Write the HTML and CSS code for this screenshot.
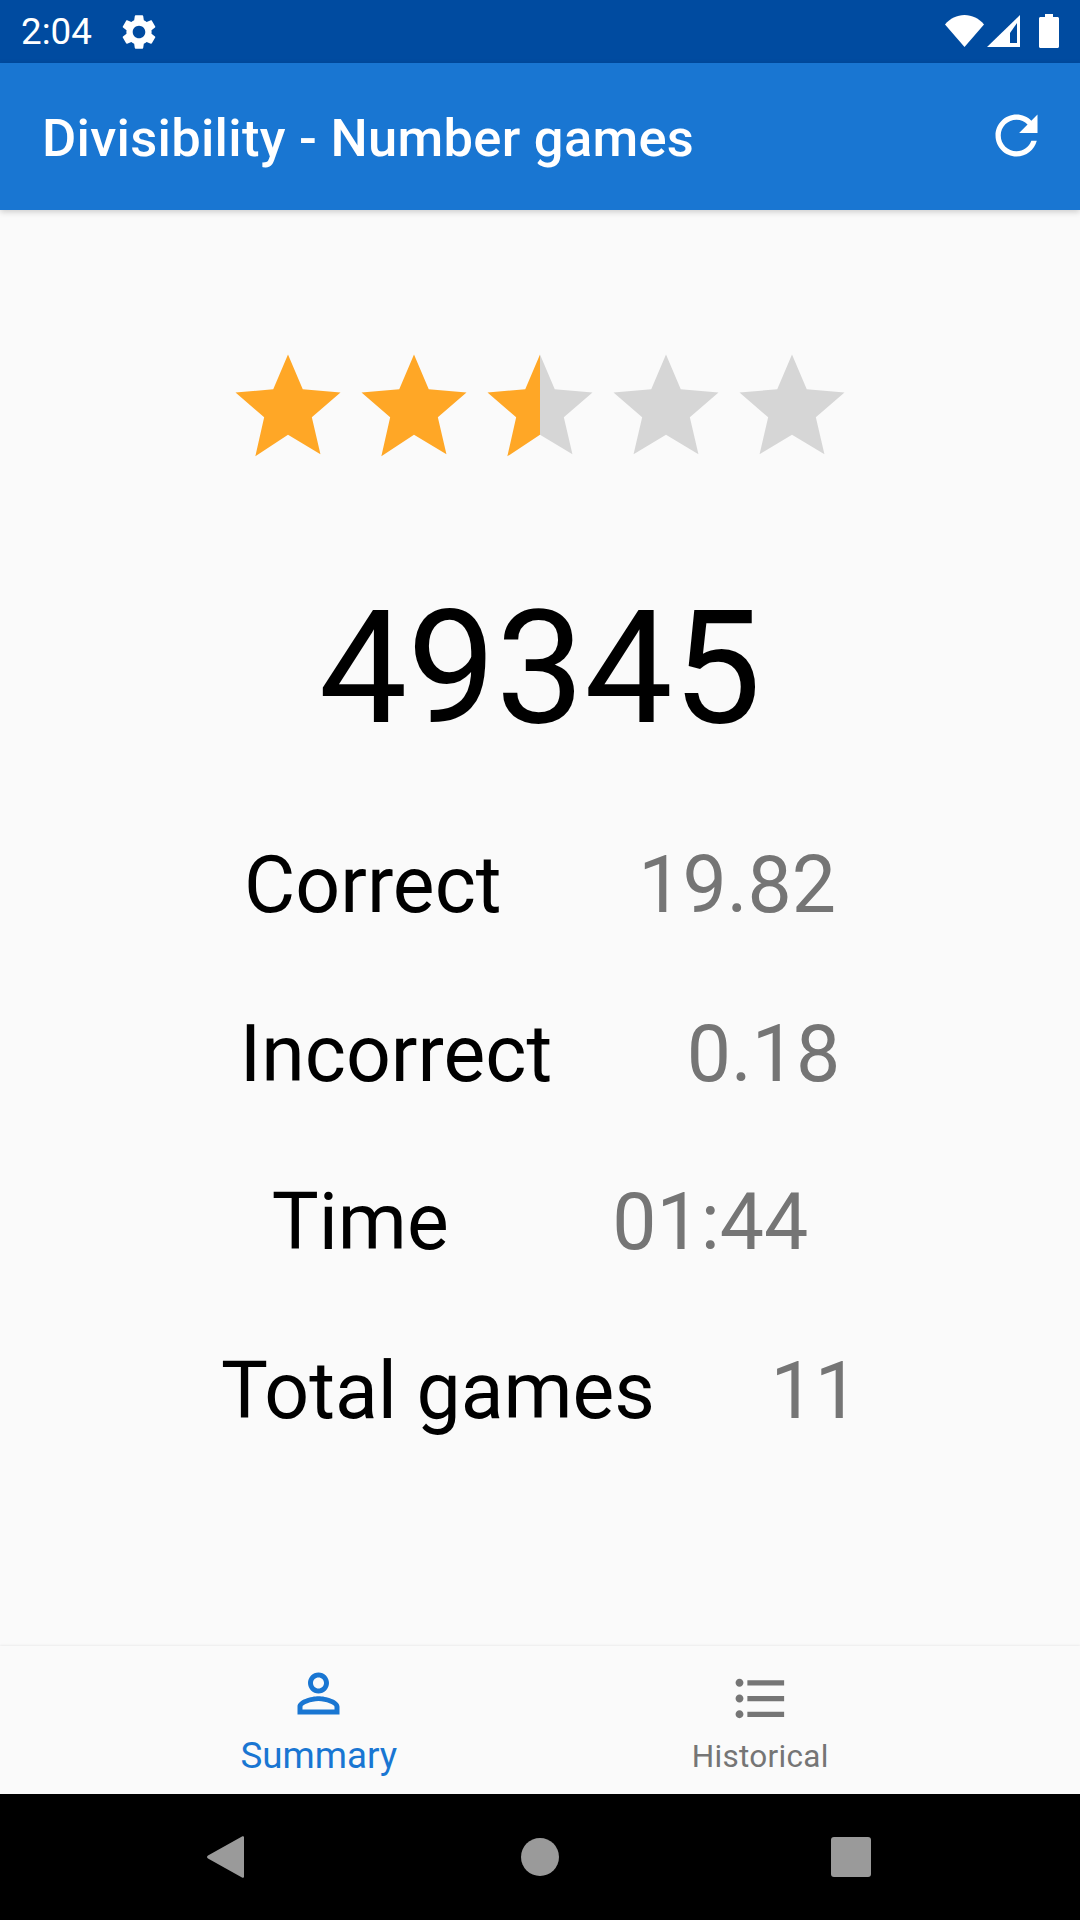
FILE: index.html
```html
<!DOCTYPE html>
<html lang="en">
<head>
    <meta charset="UTF-8">
    <meta name="viewport" content="width=device-width, initial-scale=1.0">
    <title>Divisibility - Number games</title>
    <link rel="stylesheet" href="styles.css">
</head>
<body>
    <div class="status-bar">
        <span class="clock">2:04</span>
        <svg class="gear" viewBox="0 0 24 24"><path fill="#fff" d="M19.14 12.94c.04-.3.06-.61.06-.94 0-.32-.02-.64-.07-.94l2.03-1.58c.18-.14.23-.41.12-.61l-1.92-3.32c-.12-.22-.37-.29-.59-.22l-2.39.96c-.5-.38-1.03-.7-1.62-.94l-.36-2.54c-.04-.24-.24-.41-.48-.41h-3.84c-.24 0-.43.17-.47.41l-.36 2.54c-.59.24-1.13.57-1.62.94l-2.39-.96c-.22-.08-.47 0-.59.22L2.74 8.87c-.12.21-.08.47.12.61l2.03 1.58c-.05.3-.09.63-.09.94s.02.64.07.94l-2.03 1.58c-.18.14-.23.41-.12.61l1.92 3.32c.12.22.37.29.59.22l2.39-.96c.5.38 1.03.7 1.62.94l.36 2.54c.05.24.24.41.48.41h3.84c.24 0 .44-.17.47-.41l.36-2.54c.59-.24 1.13-.56 1.62-.94l2.39.96c.22.08.47 0 .59-.22l1.92-3.32c.12-.22.07-.47-.12-.61l-2.01-1.58zM12 15.6c-1.98 0-3.6-1.62-3.6-3.6s1.62-3.6 3.6-3.6 3.6 1.62 3.6 3.6-1.62 3.6-3.6 3.6z"/></svg>
        <div class="status-icons">
            <svg class="wifi" viewBox="0 0 39 32"><path fill="#fff" d="M0 9.500C5 3.500 12 0 19.500 0S34 3.500 39 9.500L19.500 32z"/></svg>
            <svg class="signal" viewBox="0 0 33 32"><path fill="#fff" d="M0 32L33 0v32z"/><path fill="#004ba0" d="M23 28V18l7-10v20z"/></svg>
            <svg class="battery" viewBox="0 0 20 34"><path fill="#fff" d="M6 0h8v3h4.500c.8 0 1.500.7 1.500 1.500v28c0 .8-.7 1.500-1.500 1.500h-17C.7 34 0 33.300 0 32.500v-28C0 3.700.7 3 1.500 3H6z"/></svg>
        </div>
    </div>

    <header class="app-bar">
        <h1>Divisibility - Number games</h1>
        <svg class="refresh" viewBox="0 0 24 24"><path fill="#fff" d="M17.65 6.350C16.200 4.900 14.210 4 12 4c-4.420 0-7.990 3.580-7.990 8s3.570 8 7.990 8c3.730 0 6.840-2.550 7.730-6h-2.080c-.82 2.330-3.040 4-5.650 4-3.310 0-6-2.690-6-6s2.690-6 6-6c1.660 0 3.140.69 4.220 1.780L13 11h7V4l-2.350 2.350z"/></svg>
    </header>

    <main class="summary">
        <svg width="0" height="0" class="defs">
            <defs>
                <linearGradient id="halfStar">
                    <stop offset="50%" stop-color="#ffa726"/>
                    <stop offset="50%" stop-color="#d6d6d6"/>
                </linearGradient>
            </defs>
        </svg>
        <div class="stars">
            <svg class="star" viewBox="0 0 24 24"><path fill="#ffa726" d="M12 17.270L18.180 21l-1.640-7.030L22 9.240l-7.190-.61L12 2 9.190 8.630 2 9.240l5.460 4.730L5.780 21.400z"/></svg>
            <svg class="star" viewBox="0 0 24 24"><path fill="#ffa726" d="M12 17.270L18.180 21l-1.640-7.030L22 9.240l-7.190-.61L12 2 9.190 8.630 2 9.240l5.460 4.730L5.780 21.400z"/></svg>
            <svg class="star" viewBox="0 0 24 24"><path fill="url(#halfStar)" d="M12 17.270L18.180 21l-1.640-7.030L22 9.240l-7.190-.61L12 2 9.190 8.630 2 9.240l5.460 4.730L5.780 21.400z"/></svg>
            <svg class="star" viewBox="0 0 24 24"><path fill="#d6d6d6" d="M12 17.270L18.180 21l-1.640-7.030L22 9.240l-7.190-.61L12 2 9.190 8.630 2 9.240l5.460 4.730L5.820 21z"/></svg>
            <svg class="star" viewBox="0 0 24 24"><path fill="#d6d6d6" d="M12 17.270L18.180 21l-1.640-7.030L22 9.240l-7.190-.61L12 2 9.190 8.630 2 9.240l5.460 4.730L5.820 21z"/></svg>
        </div>

        <div class="score">49345</div>

        <div class="stat stat-correct"><span>Correct</span><span class="stat-value">19.82</span></div>
        <div class="stat stat-incorrect"><span>Incorrect</span><span class="stat-value">0.18</span></div>
        <div class="stat stat-time"><span>Time</span><span class="stat-value">01:44</span></div>
        <div class="stat stat-total"><span>Total games</span><span class="stat-value">11</span></div>
    </main>

    <nav class="bottom-nav">
        <div class="tab tab-active">
            <svg class="tab-icon" viewBox="0 0 24 24"><path fill="#1976d2" d="M12 5.900c1.160 0 2.100.94 2.100 2.100s-.94 2.100-2.100 2.100S9.900 9.160 9.900 8s.94-2.100 2.100-2.100m0 9c2.970 0 6.100 1.460 6.100 2.100v1.100H5.900V17c0-.64 3.130-2.100 6.100-2.100M12 4C9.790 4 8 5.790 8 8s1.790 4 4 4 4-1.790 4-4-1.790-4-4-4zm0 9c-2.670 0-8 1.340-8 4v3h16v-3c0-2.660-5.330-4-8-4z"/></svg>
            <span>Summary</span>
        </div>
        <div class="tab">
            <svg class="tab-icon" viewBox="0 0 24 24"><path fill="#757575" d="M4 10.500c-.83 0-1.500.67-1.500 1.500s.67 1.500 1.500 1.500 1.500-.67 1.500-1.500-.67-1.500-1.500-1.500zm0-6c-.83 0-1.500.67-1.500 1.500S3.170 7.500 4 7.500 5.500 6.830 5.500 6 4.830 4.500 4 4.500zm0 12c-.83 0-1.500.68-1.500 1.500s.68 1.500 1.500 1.500 1.500-.68 1.500-1.500-.67-1.500-1.500-1.500zM7 19h14v-2H7v2zm0-6h14v-2H7v2zm0-8v2h14V5H7z"/></svg>
            <span>Historical</span>
        </div>
    </nav>

    <div class="nav-bar">
        <svg class="nav-back" viewBox="0 0 37 42"><path fill="#9a9a9a" d="M35 .500c1-.7 2-.2 2 1v39c0 1.200-1 1.700-2 1L1 22.500c-1.300-.8-1.300-2.200 0-3z"/></svg>
        <div class="nav-home"></div>
        <div class="nav-recent"></div>
    </div>
</body>
</html>
```

FILE: styles.css
```css
* {
    box-sizing: border-box;
}
body {
    font-family: Roboto, sans-serif;
    background-color: #fafafa;
    display: flex;
    flex-direction: column;
    width: 1080px;
    height: 1920px;
    margin: 0;
    overflow: hidden;
}

/* status bar */
.status-bar {
    display: flex;
    align-items: center;
    height: 63px;
    padding: 0 21px 0 21px;
    background-color: #004ba0;
    color: #fff;
}
.clock {
    font-size: 36.75px;
}
.gear {
    width: 42px;
    height: 42px;
    margin-left: 26px;
}
.status-icons {
    display: flex;
    align-items: center;
    margin-left: auto;
    margin-top: -1px;
}
.wifi {
    width: 39px;
    height: 32px;
}
.signal {
    width: 33px;
    height: 32px;
    margin-left: 3px;
}
.battery {
    width: 20px;
    height: 34px;
    margin-left: 19px;
}

/* app bar */
.app-bar {
    position: relative;
    display: flex;
    align-items: center;
    justify-content: space-between;
    height: 147px;
    padding: 0 32px 0 42px;
    background-color: #1976d2;
    box-shadow: 0 2px 6px rgba(0, 0, 0, 0.18);
}
.app-bar h1 {
    margin: 3px 0 0;
    color: #fff;
    font-size: 52.5px;
    font-weight: 500;
    letter-spacing: 0.28px;
}
.refresh {
    width: 63px;
    height: 63px;
    margin-top: -2px;
}

/* summary */
.summary {
    flex: 1;
    display: flex;
    flex-direction: column;
    align-items: center;
    padding-top: 134px;
}
.defs {
    position: absolute;
}
.stars {
    display: flex;
}
.star {
    width: 126px;
    height: 126px;
}
.score {
    margin-top: 106px;
    font-size: 157.5px;
    line-height: 185px;
    color: #000;
}
.stat {
    display: flex;
    align-items: center;
    height: 168.5px;
    font-size: 78.75px;
    color: #000;
}
.stat-value {
    color: #757575;
}
.stat-correct {
    gap: 136.5px;
    margin-top: 40px;
}
.stat-incorrect {
    gap: 134.5px;
}
.stat-time {
    gap: 163.5px;
}
.stat-total {
    gap: 115.5px;
}

/* bottom tabs */
.bottom-nav {
    display: flex;
    height: 148px;
    padding: 0 99px 0 98px;
    background-color: #fafafa;
    box-shadow: 0 -1px 2px rgba(0, 0, 0, 0.06);
}
.tab {
    flex: 1;
    display: flex;
    flex-direction: column;
    align-items: center;
    padding-top: 21px;
    color: #757575;
    font-size: 31.5px;
    line-height: 37px;
    letter-spacing: 0.3px;
}
.tab span {
    margin-top: 8px;
}
.tab-active {
    padding-top: 16px;
    color: #1976d2;
    font-size: 36.75px;
    line-height: 43px;
    letter-spacing: normal;
}
.tab-active span {
    margin-top: 9px;
}
.tab-icon {
    width: 63px;
    height: 63px;
}

/* android nav bar */
.nav-bar {
    display: flex;
    align-items: center;
    height: 126px;
    padding-left: 207px;
    background-color: #000;
}
.nav-back {
    width: 37px;
    height: 42px;
}
.nav-home {
    width: 38px;
    height: 38px;
    margin: 0 272px 0 277px;
    border-radius: 50%;
    background-color: #9a9a9a;
}
.nav-recent {
    width: 40px;
    height: 40px;
    border-radius: 3px;
    background-color: #9a9a9a;
}
```
